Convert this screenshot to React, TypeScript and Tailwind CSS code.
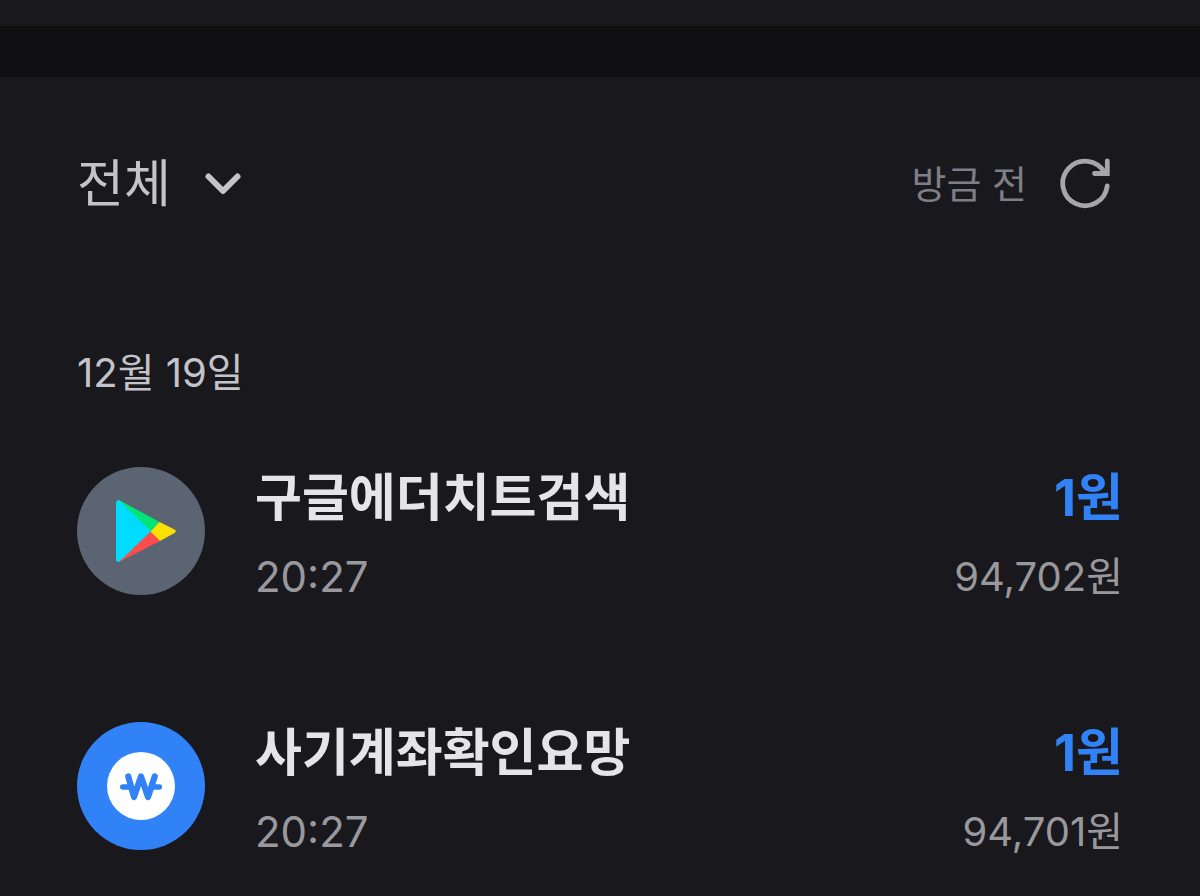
import { useState } from 'react';

type Transaction = {
  id: number;
  title: string;
  time: string;
  amount: string;
  balance: string;
  icon: 'play' | 'won';
};

const transactions: Transaction[] = [
  { id: 1, title: '구글에더치트검색', time: '20:27', amount: '1원', balance: '94,702원', icon: 'play' },
  { id: 2, title: '사기계좌확인요망', time: '20:27', amount: '1원', balance: '94,701원', icon: 'won' },
];

const PlayIcon = () => (
  <svg viewBox="0 0 128 128" className="size-32 shrink-0" aria-hidden="true">
    <circle cx="64" cy="64" r="64" fill="#5b6472" />
    <path d="M40 34 Q41 32.500 43 33.500 L82.500 55 L74 64.500 Z" fill="#00e676" />
    <path d="M40 94 Q41 95.500 43 94.500 L83 74 L74 64 Z" fill="#ff4b4b" />
    <path d="M82.500 55 L97.500 62.500 Q100 64 97.500 66 L83 74 L73.500 64.500 Z" fill="#ffe000" />
    <path d="M39 36 Q39 33 42 33.500 L74 64.300 L42.500 94.500 Q39 95.500 39 92.500 Z" fill="#00dcff" />
  </svg>
);

const WonIcon = () => (
  <svg viewBox="0 0 128 128" className="size-32 shrink-0" aria-hidden="true">
    <circle cx="64" cy="64" r="64" fill="#3182f6" />
    <circle cx="64" cy="64" r="34" fill="#fff" />
    <g fill="none" stroke="#3182f6" strokeLinecap="round" strokeLinejoin="round">
      <path d="M51.300 54.500 L57 75 L64 54.500 L71 75 L77.700 54.500" strokeWidth="6.200" />
      <path d="M45.800 65 H54 M75 65 H82.300" strokeWidth="5.600" />
    </g>
  </svg>
);

const ChevronIcon = () => (
  <svg
    viewBox="0 0 40 24"
    className="pointer-events-none h-6 w-10"
    fill="none"
    stroke="currentColor"
    strokeWidth="6"
    strokeLinecap="round"
    strokeLinejoin="round"
    aria-hidden="true"
  >
    <path d="M5.500 4.500 L20 19 L34.500 4.500" />
  </svg>
);

const RefreshIcon = () => (
  <svg viewBox="0 0 56 56" className="size-14" fill="none" stroke="currentColor" strokeWidth="4.800" aria-hidden="true">
    <path d="M48.200 30 A22.300 22.300 0 1 1 45.500 16.500" strokeLinecap="round" />
    <path d="M48.300 5 V17.500 H35.500" strokeLinecap="round" />
  </svg>
);

const TransactionRow = ({ item }: { item: Transaction }) => (
  <li className="flex items-start gap-[50px]">
    {item.icon === 'play' ? <PlayIcon /> : <WonIcon />}
    <div className="flex min-w-0 flex-1 flex-col gap-5">
      <h3 className="text-[51px] leading-[62px] font-bold text-[#e4e4e9]">{item.title}</h3>
      <time className="text-[42px] leading-[56px] text-[#98989d]">{item.time}</time>
    </div>
    <div className="flex flex-col items-end gap-5">
      <strong className="text-[51px] leading-[62px] font-bold text-[#3182f6]">{item.amount}</strong>
      <span className="text-[40px] leading-[56px] text-[#98989d]">{item.balance}</span>
    </div>
  </li>
);

const App = () => {
  const [filter, setFilter] = useState('all');

  return (
    <div className="min-h-screen bg-[#19181d] pt-[26px] font-['Inter','Noto_Sans_CJK_KR',sans-serif]">
      <div className="h-[51px] bg-[#101012]" />

      <main className="pr-[77px] pb-6 pl-[77px]">
        <header className="flex items-center justify-between pt-[75px]">
          <label className="flex items-center gap-8 text-[#c3c3c9]">
            <select
              value={filter}
              onChange={(e) => setFilter(e.target.value)}
              aria-label="거래 내역 필터"
              className="field-sizing-content appearance-none bg-transparent text-[51px] leading-[64px] outline-none"
            >
              <option value="all">전체</option>
              <option value="in">입금</option>
              <option value="out">출금</option>
            </select>
            <ChevronIcon />
          </label>

          <div className="flex items-center gap-8">
            <span className="text-[38px] leading-[60px] text-[#7e7e87]">방금 전</span>
            <button type="button" aria-label="새로고침" className="mr-2 text-[#a5a5ab]">
              <RefreshIcon />
            </button>
          </div>
        </header>

        <section className="pt-[127px]">
          <h2 className="text-[40px] leading-[60px] text-[#c3c3c9]">12월 19일</h2>
          <ul className="flex flex-col gap-[117px] pt-16">
            {transactions.map((item) => (
              <TransactionRow key={item.id} item={item} />
            ))}
          </ul>
        </section>
      </main>
    </div>
  );
};

export default App;
